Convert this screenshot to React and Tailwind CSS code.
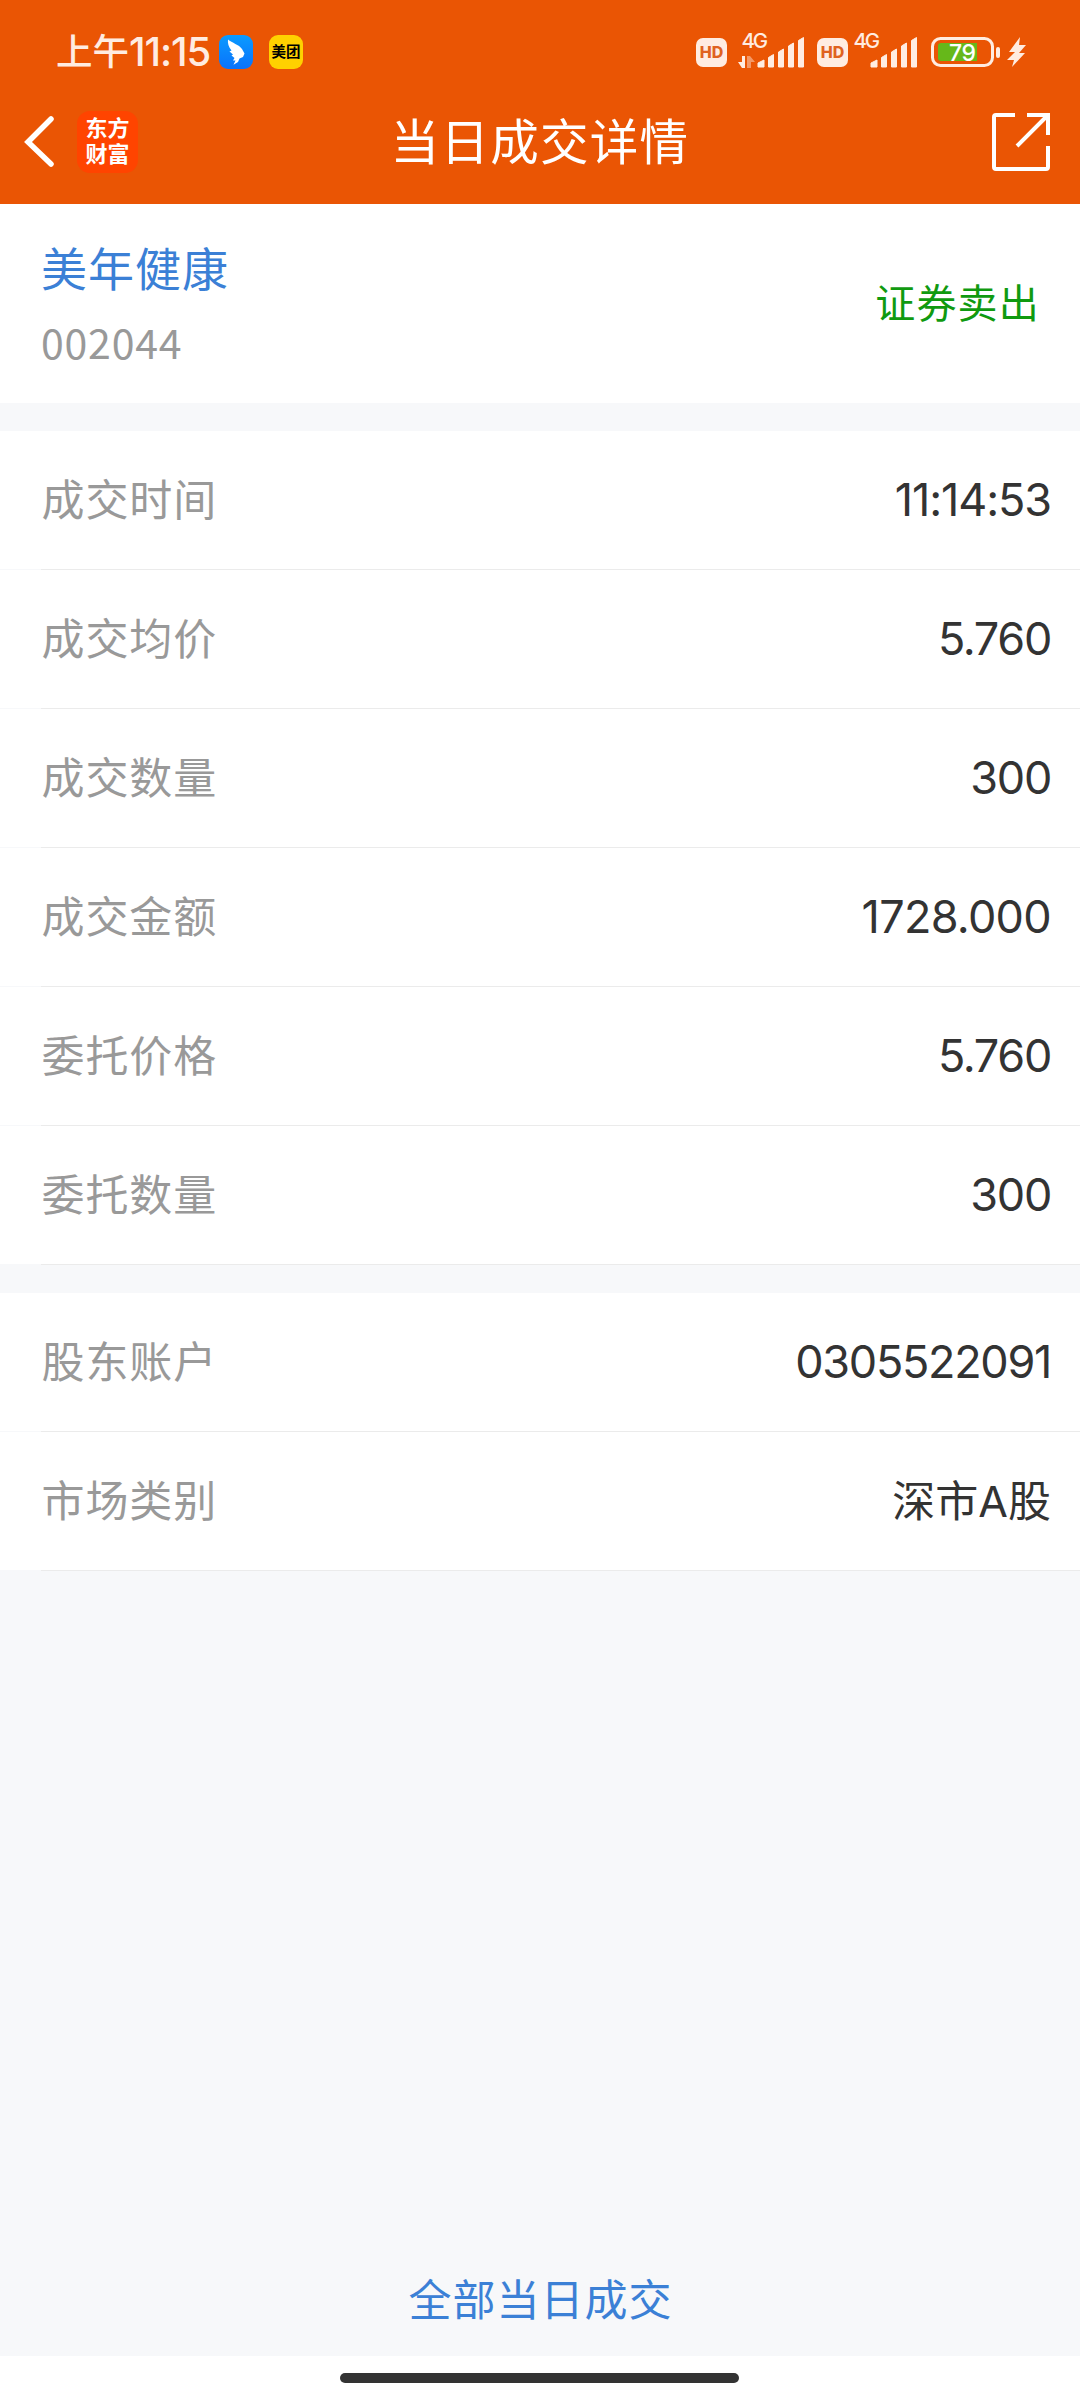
const CREAM = "#ffece1";

const orderRows = [
  { label: "成交时间", value: "11:14:53", style: "text-[45px] tracking-[-1.1px]" },
  { label: "成交均价", value: "5.760", style: "text-[45px] tracking-[-1.3px]" },
  { label: "成交数量", value: "300", style: "text-[45px] tracking-[-1.3px]" },
  { label: "成交金额", value: "1728.000", style: "text-[45px] tracking-[-0.7px]" },
  { label: "委托价格", value: "5.760", style: "text-[45px] tracking-[-1.3px]" },
  { label: "委托数量", value: "300", style: "text-[45px] tracking-[-1.3px]" },
];

const accountRows = [
  { label: "股东账户", value: "0305522091", style: "text-[45px] tracking-[-1.3px]" },
  { label: "市场类别", value: "深市A股", style: "text-[43px] tracking-[0px]" },
];

export default function App() {
  return (
    <div className="flex h-[2400px] w-[1080px] flex-col overflow-hidden bg-[#f7f8fa] font-['Inter','Noto_Sans_CJK_SC',sans-serif]">
      <header className="h-[204px] bg-[#ea5504]">
        <StatusBar />
        <TitleBar />
      </header>
      <StockSummary />
      <RowGroup rows={orderRows} />
      <RowGroup rows={accountRows} />
      <div className="flex flex-1 items-end justify-center pb-[24px] pl-px">
        <a className="text-[43px] leading-[64px] tracking-[1px] text-[#3b80d6]">
          全部当日成交
        </a>
      </div>
      <div className="flex h-[44px] justify-center bg-white pt-[17px] pr-px">
        <div className="h-[10px] w-[399px] rounded-full bg-[#333333]" />
      </div>
    </div>
  );
}

function StatusBar() {
  return (
    <div className="flex h-[104px] items-center pl-[56px] pr-[53px]">
      <div className="flex w-[163px] items-center whitespace-nowrap text-[#ffece1]">
        <span className="text-[36.5px] font-medium">上午</span>
        <span className="text-[40px] font-medium tracking-[-1.1px]">11:15</span>
      </div>
      <DingTalkIcon />
      <MeituanIcon />
      <div className="ml-auto flex items-center">
        <HdBadge />
        <Signal data />
        <HdBadge />
        <Signal />
        <Battery />
      </div>
    </div>
  );
}

function DingTalkIcon() {
  return (
    <svg className="h-[34px] w-[34px]" viewBox="0 0 34 34">
      <defs>
        <linearGradient id="ding" x1="0" y1="0" x2="0" y2="1">
          <stop offset="0" stopColor="#0a9bff" />
          <stop offset="1" stopColor="#0a72fb" />
        </linearGradient>
      </defs>
      <rect width="34" height="34" rx="9" fill="url(#ding)" />
      <path
        d="M9 4.500C13 8 20 9.500 23 14L25.500 18.500L24 22L20.500 23.500L19 27L14.500 29.800L16.500 25.500H14L15.500 23L12.500 20.500L14 19.500L10.500 16.500L12.500 15.500C9.500 12 8.500 8 9 4.500Z"
        fill="#fff"
      />
    </svg>
  );
}

function MeituanIcon() {
  return (
    <div className="ml-[16px] flex h-[34px] w-[34px] items-center justify-center rounded-[9px] bg-[#ffd100] text-[14.5px] font-bold leading-none text-black">
      美团
    </div>
  );
}

function HdBadge() {
  return (
    <div className="flex h-[29px] w-[31px] items-center justify-center rounded-[7px] bg-[#ffece1] text-[16px] font-extrabold leading-none text-[#e0621f]">
      HD
    </div>
  );
}

function Signal({ data }) {
  return (
    <svg
      className={data ? "ml-[11px] mr-[11px] h-[48px] w-[68px]" : "ml-[-1px] h-[48px] w-[72px]"}
      viewBox={data ? "0 -5 68 48" : "-4 -5 72 48"}
      fill={CREAM}
    >
      <text x={data ? 3.5 : 2.5} y="15" fontSize="20.500" fontWeight="500" textLength="26.500">
        4G
      </text>
      {data && <path d="M0 29h4v-6h3v12h-3z" />}
      {data && <path d="M9 23h3l5 6h-4v6h-4z" opacity=".45" />}
      <g stroke={CREAM} strokeLinejoin="round">
        <path d="M20 30l6-3v7h-6zM30.500 24.500l5-3v12.500h-5zM40.500 19l5-3v18h-5zM50.500 13l5-3v24h-5zM60.500 7.500l5-3v29.500h-5z" />
      </g>
    </svg>
  );
}

function Battery() {
  return (
    <svg className="ml-[12px] h-[36px] w-[96px]" viewBox="0 0 96 36">
      <rect x="1.500" y="4.500" width="60" height="27" rx="8" fill="none" stroke={CREAM} strokeWidth="3" />
      <path d="M10 9H46V27H10Q7 27 7 24V12Q7 9 10 9Z" fill="#66b81a" />
      <rect x="65" y="13" width="4" height="11" rx="2" fill={CREAM} />
      <text x="18" y="27" fontSize="23" fontWeight="500" fill="#fff" textLength="27">
        79
      </text>
      <path d="M89 3L78 18H84L76 26H83L81 33L94 19H88L95 11H88Z" fill={CREAM} />
    </svg>
  );
}

function TitleBar() {
  return (
    <div className="grid h-[76px] grid-cols-3 items-center pl-[24px] pr-[30px]">
      <div className="flex items-center">
        <svg className="h-[52px] w-[30px]" viewBox="0 0 30 52" fill="none" stroke="#fff" strokeWidth="5.500" strokeLinecap="round">
          <path d="M27 3L4 26L27 48" />
        </svg>
        <div className="ml-[23px] flex h-[62px] w-[61px] flex-col items-center justify-center rounded-[13px] bg-[#ff4400] pb-[3px] text-[22px] font-bold leading-[26px] text-white">
          <span>东方</span>
          <span>财富</span>
        </div>
      </div>
      <h1 className="whitespace-nowrap pl-[6px] pt-[2px] text-center text-[48.5px] leading-none tracking-[1.3px] text-white">
        当日成交详情
      </h1>
      <svg className="ml-auto h-[58px] w-[58px]" viewBox="0 0 58 58" fill="none" stroke="#fff" strokeWidth="4">
        <path d="M23 2H4Q2 2 2 4V54Q2 56 4 56H54Q56 56 56 54V33" />
        <path d="M35 2H56V22M56 2L25 33" />
      </svg>
    </div>
  );
}

function StockSummary() {
  return (
    <div className="flex h-[199px] items-center justify-between bg-white pl-[41px] pr-[40px]">
      <div className="pt-[4px]">
        <div className="text-[46px] leading-[70px] tracking-[1px] text-[#3b80d6]">
          美年健康
        </div>
        <div className="font-['Noto_Sans_CJK_SC',sans-serif] text-[41px] leading-[74px] tracking-[0.8px] text-[#999999]">
          002044
        </div>
      </div>
      <div className="text-[40px] tracking-[1.2px] text-[#109a10]">证券卖出</div>
    </div>
  );
}

function RowGroup({ rows }) {
  return (
    <div className="mt-[28px]">
      {rows.map((row) => (
        <DetailRow key={row.label} {...row} />
      ))}
    </div>
  );
}

function DetailRow({ label, value, style }) {
  return (
    <div>
      <div className="flex h-[138px] items-center justify-between bg-white pl-[41.5px] pr-[29px]">
        <span className="text-[43px] tracking-[0.9px] text-[#999999]">{label}</span>
        <span className={`text-[#333333] ${style}`}>{value}</span>
      </div>
      <div className="ml-[41px] h-px bg-[#ebebeb]" />
    </div>
  );
}
